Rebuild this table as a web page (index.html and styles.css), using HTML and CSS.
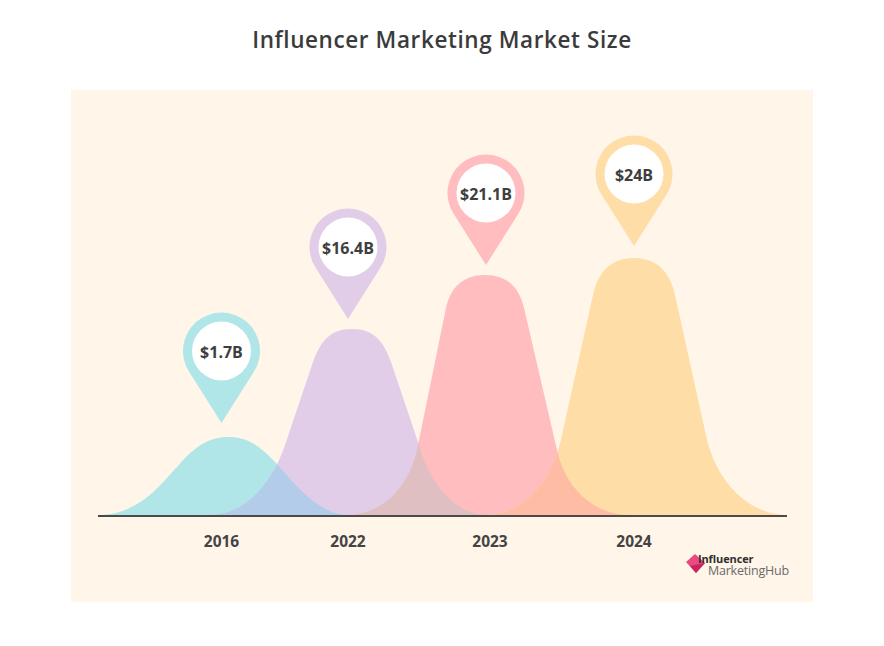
FILE: index.html
```html
<!DOCTYPE html>
<html lang="en">
<head>
<meta charset="utf-8">
<title>Influencer Marketing Market Size</title>
<link rel="stylesheet" href="styles.css">
</head>
<body>
<h1 class="title">Influencer Marketing Market Size</h1>
<div class="panel">
  <svg class="chart" viewBox="71 90 742 462" width="742" height="462" xmlns="http://www.w3.org/2000/svg">
    <defs>
      <clipPath id="cTeal"><path d="M97 515 C140 515 160 485 185 458 C200 443 212 437 228 437 C246 437 258 444 275 462 C300 490 320 515 350 515 Z"/></clipPath>
      <clipPath id="cPurple"><path d="M210 515 C240 515 270 490 285 445 L312 365 C320 341 330 329 352 329 C374 329 384 341 392 365 L419 445 C432 492 462 515 487 515 Z"/></clipPath>
      <clipPath id="cPink"><path d="M347 515 C380 515 408 490 417 450 L446 308 C451 287 463 275 485 275 C507 275 519 287 524 308 L557 450 C566 490 595 515 630 515 Z"/></clipPath>
    </defs>
    <path class="teal" d="M97 515 C140 515 160 485 185 458 C200 443 212 437 228 437 C246 437 258 444 275 462 C300 490 320 515 350 515 Z"/>
    <path class="purple" d="M210 515 C240 515 270 490 285 445 L312 365 C320 341 330 329 352 329 C374 329 384 341 392 365 L419 445 C432 492 462 515 487 515 Z"/>
    <path class="pink" d="M347 515 C380 515 408 490 417 450 L446 308 C451 287 463 275 485 275 C507 275 519 287 524 308 L557 450 C566 490 595 515 630 515 Z"/>
    <path class="yellow" d="M487 515 C520 515 552 485 562 435 L593 295 C598 272 611 258 634 258 C657 258 670 272 675 295 L707 440 C720 490 755 515 787 515 Z"/>
    <path class="ov-tp" clip-path="url(#cTeal)" d="M210 515 C240 515 270 490 285 445 L312 365 C320 341 330 329 352 329 C374 329 384 341 392 365 L419 445 C432 492 462 515 487 515 Z"/>
    <path class="ov-pp" clip-path="url(#cPurple)" d="M347 515 C380 515 408 490 417 450 L446 308 C451 287 463 275 485 275 C507 275 519 287 524 308 L557 450 C566 490 595 515 630 515 Z"/>
    <path class="ov-py" clip-path="url(#cPink)" d="M487 515 C520 515 552 485 562 435 L593 295 C598 272 611 258 634 258 C657 258 670 272 675 295 L707 440 C720 490 755 515 787 515 Z"/>
    <line class="axis" x1="98" y1="516" x2="787" y2="516"/>

    <path class="teal" d="M221.5 423 L189 371.6 A38.5 38.5 0 1 1 254 371.6 Z"/>
    <circle class="hole" cx="221.5" cy="351" r="29.5"/>
    <text class="value" x="221.5" y="352">$1.7B</text>

    <path class="purple" d="M348 319 L315.5 267.6 A38.5 38.5 0 1 1 380.5 267.6 Z"/>
    <circle class="hole" cx="348" cy="247" r="29.5"/>
    <text class="value" x="348" y="248">$16.4B</text>

    <path class="pink" d="M486 265 L453.5 213.6 A38.5 38.5 0 1 1 518.5 213.6 Z"/>
    <circle class="hole" cx="486" cy="193" r="29.5"/>
    <text class="value" x="486" y="194">$21.1B</text>

    <path class="yellow" d="M634 246 L601.5 194.6 A38.5 38.5 0 1 1 666.5 194.6 Z"/>
    <circle class="hole" cx="634" cy="174" r="29.5"/>
    <text class="value" x="634" y="175">$24B</text>

    <text class="year" x="221.5" y="541">2016</text>
    <text class="year" x="348" y="541">2022</text>
    <text class="year" x="490" y="541">2023</text>
    <text class="year" x="634" y="541">2024</text>
  </svg>
  <div class="brand-row">
    <div class="brand">
      <svg class="brand-icon" viewBox="0 0 22 22" width="22" height="22" xmlns="http://www.w3.org/2000/svg">
        <polygon class="bi-light" points="2,9 11,1 21,10 12,20"/>
        <polygon class="bi-dark" points="6,13 21,10 12,20"/>
      </svg>
      <div class="brand-text">
        <span class="brand-top">Influencer</span>
        <span class="brand-bottom">MarketingHub</span>
      </div>
    </div>
  </div>
</div>
</body>
</html>
```

FILE: styles.css
```css
html, body {
  margin: 0;
  padding: 0;
  background: #ffffff;
}

body {
  font-family: "Open Sans", "Noto Sans", sans-serif;
  color: #3d3d3d;
}

.title {
  margin: 0;
  padding-top: 25px;
  height: 30px;
  line-height: 30px;
  margin-bottom: 35px;
  text-align: center;
  font-size: 22.5px;
  font-weight: 600;
  color: #3b3b3b;
  letter-spacing: 0.6px;
}

.panel {
  width: 742px;
  height: 512px;
  margin: 0 auto;
  background: #fff5e9;
  display: flex;
  flex-direction: column;
}

.chart {
  display: block;
}

.teal { fill: #b0e6e8; }
.purple { fill: #e2cde9; }
.pink { fill: #ffbdc0; }
.yellow { fill: #fedda6; }
.ov-tp { fill: #b3cce9; }
.ov-pp { fill: #dfbfc2; }
.ov-py { fill: #ffbca5; }

.axis {
  stroke: #4a4a4a;
  stroke-width: 2;
}

.hole { fill: #ffffff; }

.value {
  font-family: "Open Sans", "Noto Sans", sans-serif;
  font-size: 16px;
  font-weight: 700;
  fill: #3e3e3e;
  text-anchor: middle;
  dominant-baseline: central;
}

.year {
  font-family: "Open Sans", "Noto Sans", sans-serif;
  font-size: 15.5px;
  font-weight: 700;
  fill: #444444;
  text-anchor: middle;
  dominant-baseline: central;
}

.brand-row {
  display: flex;
  justify-content: flex-end;
  padding-right: 24px;
  padding-top: 1px;
}

.brand {
  display: flex;
  align-items: flex-start;
}

.brand-icon {
  display: block;
  margin-top: 0;
  margin-right: -8px;
}

.bi-light { fill: #ea4a7f; }
.bi-dark { fill: #c9245f; }

.brand-text {
  display: flex;
  flex-direction: column;
  align-items: flex-start;
}

.brand-top {
  font-family: "Open Sans", sans-serif;
  font-size: 11px;
  font-weight: 700;
  line-height: 12px;
  color: #2e2e2e;
  letter-spacing: -0.1px;
}

.brand-bottom {
  font-family: "Open Sans", sans-serif;
  font-size: 12.5px;
  font-weight: 400;
  line-height: 12px;
  color: #6a6a6a;
  margin-left: 10px;
  letter-spacing: -0.2px;
}
```
